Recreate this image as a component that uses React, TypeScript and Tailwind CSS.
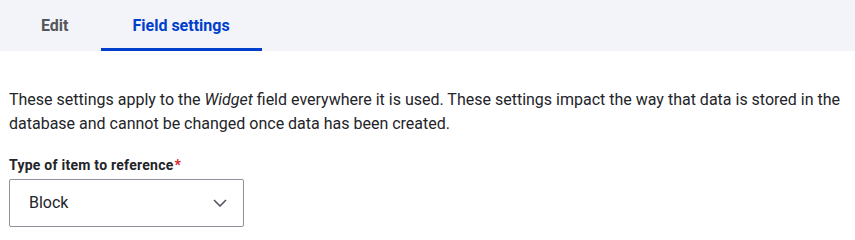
const ChevronDown = () => (
  <svg width="14" height="8" viewBox="0 0 14 8" fill="none" className="text-[#545560]">
    <path d="M1 1l6 6 6-6" stroke="currentColor" strokeWidth="1.6" />
  </svg>
);

const App = () => {
  return (
    <div className="w-[855px] h-[238px] bg-white font-['Roboto',sans-serif] text-[#232429] overflow-hidden">
      {/* tabs */}
      <div className="h-[51px] bg-[#f3f4f9] pl-[9px] flex items-stretch">
        <a className="px-8 flex items-center text-[16px] font-bold text-[#55565b] cursor-pointer">
          Edit
        </a>
        <a className="px-8 flex items-center text-[16px] font-bold text-[#003ecc] border-b-[3px] border-[#003ecc] pt-[3px] cursor-pointer">
          Field settings
        </a>
      </div>
      {/* body */}
      <div className="px-[9px]">
        <p className="mt-[37px] text-[16px] leading-[24px]">
          These settings apply to the <em>Widget</em> field everywhere it is used. These settings
          impact the way that data is stored in the database and cannot be changed once data has
          been created.
        </p>
        <div className="mt-[20px]">
          <label className="block text-[14px] font-bold leading-[18px] tracking-[0.25px]">
            Type of item to reference<span className="text-[#dc2323] ml-[1px]">*</span>
          </label>
          <div className="mt-[5px] w-[235px] h-[48px] border border-[#8e929c] rounded-[2px] flex items-center justify-between pl-[19px] pr-[16px] text-[16px]">
            <span>Block</span>
            <ChevronDown />
          </div>
        </div>
      </div>
    </div>
  );
};

export default App;
